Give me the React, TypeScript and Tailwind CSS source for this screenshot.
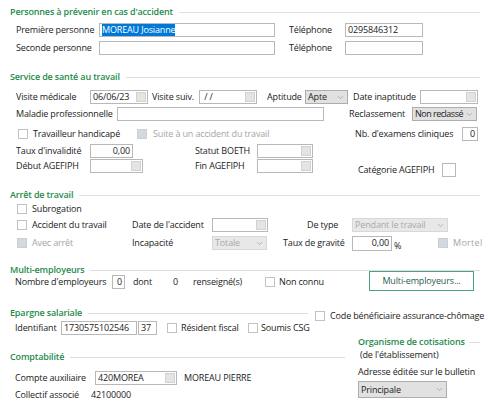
import { ChevronDown } from "lucide-react";
import type { ReactNode } from "react";

// small helpers for the old-school windows form look
const Lbl = ({ className = "", gray, children }: { className?: string; gray?: boolean; children: ReactNode }) => (
  <span className={`shrink-0 whitespace-nowrap leading-[12px] ${gray ? "text-[#a5a5a5]" : ""} ${className}`}>
    {children}
  </span>
);

const Field = ({ className = "", value = "", right, btn, selected }: any) => (
  <div className={`flex shrink-0 h-[14px] border border-[#b8b8b8] bg-white ${className}`}>
    <div
      className={`flex-1 min-w-0 px-[2px] leading-[12px] whitespace-nowrap overflow-hidden ${right ? "text-right" : ""}`}
    >
      {selected ? <span className="bg-[#0078d7] text-white">{value}</span> : value}
    </div>
    {btn && <div className="w-[10px] my-px mr-px bg-[#e4e4e4] border border-[#d2d2d2]" />}
  </div>
);

const Sel = ({ className = "", textClass = "", value, disabled }: any) => (
  <div
    className={`flex items-center shrink-0 h-[14px] border ${
      disabled ? "border-[#d8d8d8] bg-[#e8e8e8] text-[#a8a8a8]" : "border-[#adadad] bg-[#e1e1e1]"
    } ${className}`}
  >
    <span className={`flex-1 min-w-0 pl-[2px] leading-[12px] whitespace-nowrap overflow-hidden ${textClass}`}>
      {value}
    </span>
    <ChevronDown size={9} strokeWidth={1.5} className="mr-[2px] shrink-0 text-[#8c8c8c]" />
  </div>
);

const Check = ({ className = "", disabled }: { className?: string; disabled?: boolean }) => (
  <span
    className={`shrink-0 w-[10px] h-[10px] border ${
      disabled ? "bg-[#d3d9de] border-[#c9cfd4]" : "bg-white border-[#c2c2c2]"
    } ${className}`}
  />
);

const Header = ({ title, className = "" }: { title: string; className?: string }) => (
  <div className={`flex items-center h-[12px] ${className}`}>
    <span className="ml-[10px] whitespace-nowrap font-semibold text-[#1f8b4c] leading-[12px]">{title}</span>
    <span className="flex-1 h-px bg-[#dedede] ml-[6px]" />
  </div>
);

export default function App() {
  return (
    <div
      className="w-[489px] h-[408px] overflow-hidden bg-white text-[#222] text-[9px] tracking-[-0.15px]"
      style={{ fontFamily: "'Open Sans', 'Noto Sans', sans-serif" }}
    >
      {/* ── Personnes à prévenir ── */}
      <Header title="Personnes à prévenir en cas d'accident" className="mt-[6px] mr-[9px]" />
      <div className="flex items-center h-[14px] mt-[5px]">
        <Lbl className="ml-[16px] w-[83px]">Première personne</Lbl>
        <Field className="w-[176px]" value="MOREAU Josianne" selected />
        <Lbl className="ml-[14px] w-[56px]">Téléphone</Lbl>
        <Field className="w-[78px]" value="0295846312" />
      </div>
      <div className="flex items-center h-[14px] mt-[4px]">
        <Lbl className="ml-[16px] w-[83px]">Seconde personne</Lbl>
        <Field className="w-[176px]" />
        <Lbl className="ml-[14px] w-[56px]">Téléphone</Lbl>
        <Field className="w-[78px]" />
      </div>

      {/* ── Service de santé au travail ── */}
      <Header title="Service de santé au travail" className="mt-[16px] mr-[9px]" />
      <div className="flex items-center h-[14px] mt-[7px]">
        <Lbl className="ml-[16px] w-[74px]">Visite médicale</Lbl>
        <Field className="w-[58px]" value="06/06/23" btn />
        <Lbl className="ml-[4px] w-[47px]">Visite suiv.</Lbl>
        <Field className="w-[58px]" value={"\u00a0/ /"} btn />
        <Lbl className="ml-[10px] w-[38px]">Aptitude</Lbl>
        <Sel className="w-[43px]" value="Apte" />
        <Lbl className="ml-[5px] w-[67px]">Date inaptitude</Lbl>
        <Field className="w-[58px]" btn />
      </div>
      <div className="flex items-center h-[14px] mt-[3px]">
        <Lbl className="ml-[16px] w-[101px]">Maladie professionnelle</Lbl>
        <Field className="w-[207px]" />
        <Lbl className="ml-[25px] w-[63px]">Reclassement</Lbl>
        <Sel className="w-[65px]" textClass="tracking-[-0.5px]" value="Non reclassé" />
      </div>
      <div className="flex items-center h-[14px] mt-[6px]">
        <Check className="ml-[18px]" />
        <Lbl className="ml-[5px] w-[104px]">Travailleur handicapé</Lbl>
        <Check disabled />
        <Lbl gray className="ml-[6px] w-[202px]">Suite à un accident du travail</Lbl>
        <Lbl className="w-[107px]">Nb. d'examens cliniques</Lbl>
        <Field className="w-[16px]" value="0" right />
      </div>
      <div className="flex items-center h-[14px] mt-[3px]">
        <Lbl className="ml-[16px] w-[74px]">Taux d'invalidité</Lbl>
        <Field className="w-[43px]" value="0,00" right />
        <Lbl className="ml-[62px] w-[62px]">Statut BOETH</Lbl>
        <Field className="w-[56px]" btn />
      </div>
      <div className="flex items-center h-[14px] mt-[1px]">
        <Lbl className="ml-[16px] w-[74px]">Début AGEFIPH</Lbl>
        <Field className="w-[53px]" btn />
        <Lbl className="ml-[52px] w-[62px]">Fin AGEFIPH</Lbl>
        <Field className="w-[56px]" btn />
        <Lbl className="ml-[45px] w-[84px] translate-y-[4px]">Catégorie AGEFIPH</Lbl>
        <Field className="w-[14px] translate-y-[4px]" />
      </div>

      {/* ── Arrêt de travail ── */}
      <Header title="Arrêt de travail" className="mt-[16px] mr-[9px]" />
      <div className="flex items-center h-[14px] mt-[1px]">
        <Check className="ml-[17px]" />
        <Lbl className="ml-[5px]">Subrogation</Lbl>
      </div>
      <div className="flex items-center h-[14px] mt-[2px]">
        <Check className="ml-[17px]" />
        <Lbl className="ml-[5px] w-[100px]">Accident du travail</Lbl>
        <Lbl className="w-[80px]">Date de l'accident</Lbl>
        <Field className="w-[56px]" btn />
        <Lbl className="ml-[39px] w-[45px]">De type</Lbl>
        <Sel className="w-[96px]" value="Pendant le travail" disabled />
      </div>
      <div className="flex items-center h-[14px] mt-[4px]">
        <Check className="ml-[17px]" disabled />
        <Lbl gray className="ml-[5px] w-[100px]">Avec arrêt</Lbl>
        <Lbl className="w-[80px]">Incapacité</Lbl>
        <Sel className="w-[55px]" value="Totale" disabled />
        <Lbl className="ml-[16px] w-[69px]">Taux de gravité</Lbl>
        <Field className="w-[40px] h-[15px]" value="0,00" right />
        <Lbl className="ml-[2px] w-[44px] translate-y-[3px]">%</Lbl>
        <Check disabled />
        <Lbl gray className="ml-[5px] tracking-[0.3px]">Mortel</Lbl>
      </div>

      {/* ── Multi-employeurs ── */}
      <div className="flex items-center h-[10px] mt-[15px] mr-[9px]">
        <span className="ml-[10px] whitespace-nowrap font-semibold text-[#1f8b4c] leading-[10px]">
          Multi-employeurs
        </span>
        <span className="flex-1 h-px bg-[#dedede] ml-[6px]" />
      </div>
      <div className="flex items-center h-[12px] mt-px">
        <Lbl className="ml-[15px] w-[97px]">Nombre d'employeurs</Lbl>
        <Field className="w-[13px]" value="0" right />
        <Lbl className="ml-[8px] w-[40px]">dont</Lbl>
        <Lbl className="w-[20px]">0</Lbl>
        <Lbl className="w-[72px]">renseigné(s)</Lbl>
        <Check />
        <Lbl className="ml-[4px] w-[90px]">Non connu</Lbl>
        <button className="shrink-0 w-[105px] h-[20px] border border-[#4aa384] bg-white text-[#2c5d4f] leading-[12px] -translate-y-[1px]">
          Multi-employeurs...
        </button>
      </div>

      {/* ── Epargne salariale ── */}
      <div className="flex items-center h-[12px] mt-[19px]">
        <div className="w-[308px] shrink-0">
          <Header title="Epargne salariale" />
        </div>
        <Check className="ml-[7px] translate-y-[3px]" />
        <Lbl className="ml-[5px] translate-y-[3px]">Code bénéficiaire assurance-chômage</Lbl>
      </div>
      <div className="flex items-center h-[14px] mt-[2px]">
        <Lbl className="ml-[15px] w-[46px]">Identifiant</Lbl>
        <Field className="w-[76px]" value="1730575102546" />
        <Field className="ml-px w-[19px]" value="37" />
        <Check className="ml-[10px]" />
        <Lbl className="ml-[4px] w-[67px]">Résident fiscal</Lbl>
        <Check />
        <Lbl className="ml-[3px]">Soumis CSG</Lbl>
      </div>

      {/* ── Comptabilité + Organisme ── */}
      <div className="flex">
        <div className="w-[345px] shrink-0">
          <Header title="Comptabilité" className="mt-[16px]" />
          <div className="flex items-center h-[14px] mt-[8px]">
            <Lbl className="ml-[15px] w-[80px]">Compte auxiliaire</Lbl>
            <Field className="w-[82px]" value="420MOREA" btn />
            <Lbl className="ml-[7px]">MOREAU PIERRE</Lbl>
          </div>
          <div className="flex items-center h-[14px] mt-[3px]">
            <Lbl className="ml-[15px] w-[76px]">Collectif associé</Lbl>
            <Lbl>42100000</Lbl>
          </div>
        </div>
        <div className="ml-[13px] w-[122px] shrink-0">
          <div className="flex items-center h-[12px] mt-[1px]">
            <span className="whitespace-nowrap font-semibold text-[#1f8b4c] leading-[12px]">
              Organisme de cotisations
            </span>
            <span className="flex-1 h-px bg-[#dedede] ml-[4px]" />
          </div>
          <div className="h-[12px] mt-px ml-[2px] leading-[12px] whitespace-nowrap">(de l'établissement)</div>
          <div className="h-[12px] mt-[5px] leading-[12px] whitespace-nowrap">Adresse éditée sur le bulletin</div>
          <Sel className="mt-[3px] w-[89px] !h-[17px]" value="Principale" />
        </div>
      </div>
    </div>
  );
}
